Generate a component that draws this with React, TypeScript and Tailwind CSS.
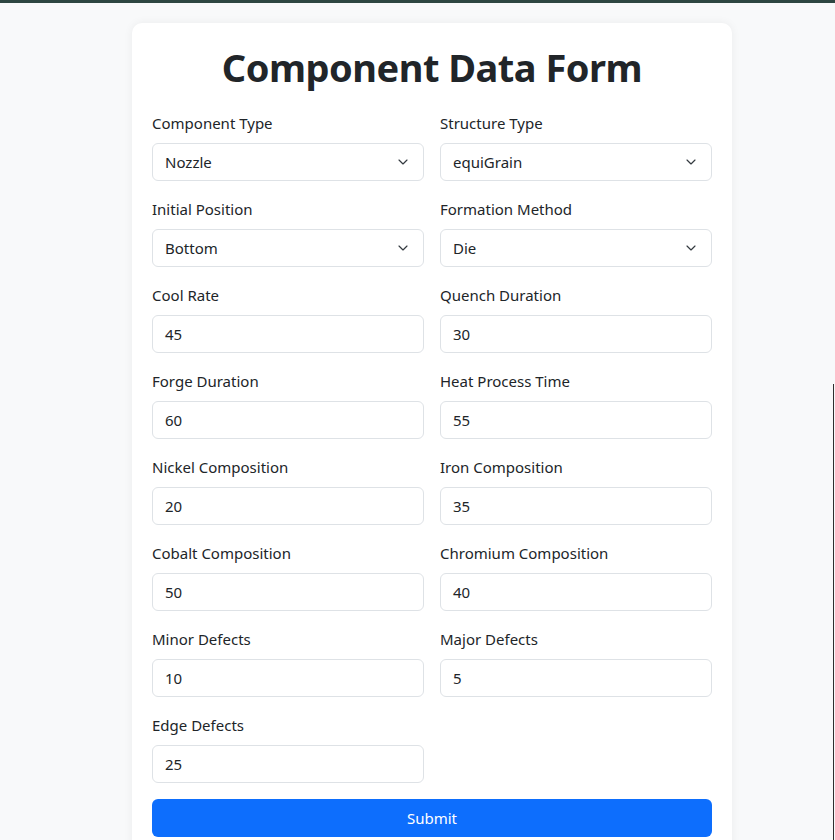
import { ChevronDown } from "lucide-react";

type Field = {
  label: string;
  value: string;
  select?: boolean;
};

const fields: Field[] = [
  { label: "Component Type", value: "Nozzle", select: true },
  { label: "Structure Type", value: "equiGrain", select: true },
  { label: "Initial Position", value: "Bottom", select: true },
  { label: "Formation Method", value: "Die", select: true },
  { label: "Cool Rate", value: "45" },
  { label: "Quench Duration", value: "30" },
  { label: "Forge Duration", value: "60" },
  { label: "Heat Process Time", value: "55" },
  { label: "Nickel Composition", value: "20" },
  { label: "Iron Composition", value: "35" },
  { label: "Cobalt Composition", value: "50" },
  { label: "Chromium Composition", value: "40" },
  { label: "Minor Defects", value: "10" },
  { label: "Major Defects", value: "5" },
  { label: "Edge Defects", value: "25" },
];

function FormField({ label, value, select }: Field) {
  return (
    <div className="mb-4">
      <label className="mb-2 block text-[15px] leading-6 text-[#212529]">{label}</label>
      <div className="flex h-[38px] items-center justify-between rounded-md border border-[#dee2e6] bg-white pl-3 pr-3 text-[15px] text-[#212529]">
        <span>{value}</span>
        {select && <ChevronDown size={16} strokeWidth={1.75} className="text-[#343a40]" />}
      </div>
    </div>
  );
}

export default function App() {
  return (
    <div
      className="min-h-screen border-t-[3px] border-[#2d4641] bg-[#f8f9fa] pt-5"
      style={{ fontFamily: '"Noto Sans", "Open Sans", sans-serif' }}
    >
      <div className="ml-[132px] w-[600px] rounded-[10px] bg-white px-5 pt-5 pb-5 shadow-[0_0_10px_rgba(0,0,0,0.06)]">
        <h1 className="mb-5 text-center text-[38px] font-bold leading-[48px] tracking-[-0.5px] text-[#212529]">
          Component Data Form
        </h1>
        <div className="grid grid-cols-2 gap-x-4">
          {fields.map((f) => (
            <FormField key={f.label} {...f} />
          ))}
        </div>
        <button className="h-[38px] w-full rounded-md bg-[#0d6efd] text-[15px] text-white">Submit</button>
      </div>
      <div className="fixed top-[384px] right-px bottom-0 w-px bg-[#2f2f2f]" />
    </div>
  );
}
